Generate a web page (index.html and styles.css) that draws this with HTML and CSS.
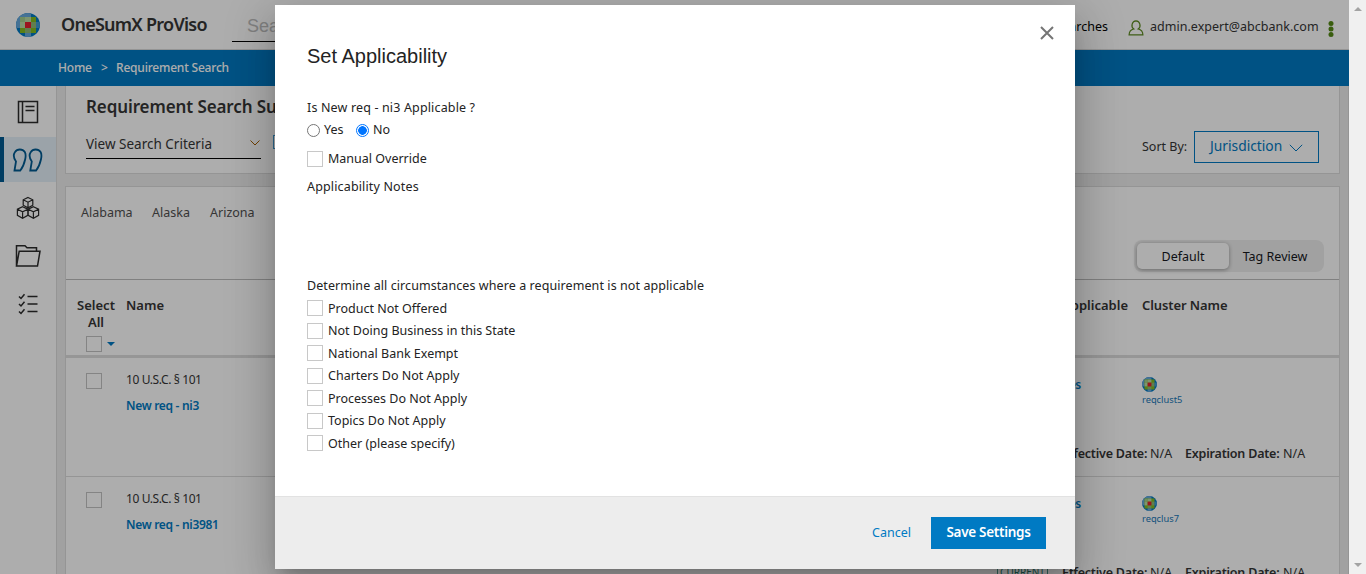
FILE: index.html
```
<!DOCTYPE html>
<html lang="en">
<head>
<meta charset="utf-8">
<title>OneSumX ProViso</title>
<link rel="stylesheet" href="styles.css">
</head>
<body>
<svg width="0" height="0" class="defs">
  <defs>
    <clipPath id="disc"><circle cx="12" cy="12" r="12"/></clipPath>
    <symbol id="globe" viewBox="0 0 24 24">
      <g clip-path="url(#disc)">
        <rect width="24" height="24" fill="#007ac3"/>
        <rect x="3" y="0" width="12" height="4" fill="#66a8dc"/>
        <rect x="0" y="4" width="4" height="11" fill="#66a8dc"/>
        <rect x="4" y="4" width="16" height="16" fill="#85bc20"/>
        <rect x="4" y="4" width="5" height="5" fill="#a3cf8c"/>
        <rect x="9" y="4" width="6" height="5" fill="#b9dca5"/>
        <rect x="4" y="9" width="5" height="6" fill="#b9dca5"/>
        <rect x="15" y="9" width="5" height="6" fill="#8fba75"/>
        <rect x="9" y="15" width="6" height="5" fill="#8fba75"/>
        <rect x="9" y="20" width="6" height="4" fill="#66a8dc"/>
        <rect x="20" y="9" width="4" height="6" fill="#409bd2"/>
        <rect x="9" y="9" width="6" height="6" fill="#e5202e"/>
      </g>
    </symbol>
  </defs>
</svg>
<div class="app">
  <div class="page">
    <header class="top">
      <svg class="logo"><use href="#globe"/></svg>
      <span class="brand">OneSumX ProViso</span>
      <span class="search">Search</span>
      <div class="user-area">
        <span class="saved">Saved Searches</span>
        <svg class="user-icon" viewBox="0 0 16 16"><path d="M8 .8a4.200 4.500 0 0 1 2.200 8.200c3 .6 4.600 2.700 4.700 5.800H1.100c.1-3.100 1.700-5.200 4.700-5.800A4.200 4.500 0 0 1 8 .8z"/></svg>
        <span class="email">admin.expert@abcbank.com</span>
        <svg class="dots" viewBox="0 0 6 18"><circle cx="3" cy="3.500" r="2.500"/><circle cx="3" cy="9" r="2.500"/><circle cx="3" cy="14.500" r="2.500"/></svg>
      </div>
    </header>
    <nav class="crumbs"><span class="c-home">Home</span><span class="c-sep">&gt;</span><span class="c-cur">Requirement Search</span></nav>
    <div class="body">
      <aside class="side">
        <div class="item"><svg viewBox="0 0 28 24"><path d="M4.500 1.500h19v21h-19zM8.500 1.500v21M11.500 6.500h9M11.500 10.500h9"/></svg></div>
        <div class="item active"><svg class="wide" viewBox="0 0 32 26"><path d="M2.500 23.500 4 14.500C1.500 11 1.300 7.500 3 5c2-3.300 7.600-3.400 9.800 0 1.200 2 1 4.500.4 7.300-1 4.600-2.300 8-4.900 11.200zM18.300 23.500l1.500-9C17.300 11 17.100 7.500 18.800 5c2-3.300 7.600-3.400 9.800 0 1.200 2 1 4.500.4 7.300-1 4.600-2.300 8-4.900 11.200z"/></svg></div>
        <div class="item"><svg class="thin" viewBox="0 0 28 24"><path d="m14 1.500 4.800 2.300v5.400L14 11.700 9.200 9.200V3.800zM9.200 3.800 14 6.200l4.800-2.400M14 6.200v5.500M8.600 10.700l5.200 2.500v6.200l-5.200 2.800-5.200-2.800v-6.200zM3.400 13.200l5.200 2.600 5.200-2.600M8.600 15.800v6.400M19.400 10.700l5.200 2.500v6.200l-5.200 2.800-5.200-2.800v-6.200zM14.200 13.200l5.200 2.600 5.200-2.600M19.400 15.800v6.400"/></svg></div>
        <div class="item"><svg viewBox="0 0 28 24"><path d="M2.500 22V1.800H11l2 2h9.500v3.400M2.500 22 5.200 7.200H26L23.500 22z"/></svg></div>
        <div class="item"><svg viewBox="0 0 28 24"><path d="m5 4.500 2 2 3.500-4.200M5 12l2 2 3.500-4.200M5 19.500l2 2 3.500-4.200M13.500 4.500h10M13.500 12h10M13.500 19.500h10"/></svg></div>
      </aside>
      <main class="main">
        <section class="summary">
          <div class="sum-left">
            <h1>Requirement Search Summary</h1>
            <div class="crit-row">
              <div class="criteria"><span>View Search Criteria</span><svg viewBox="0 0 10 6"><path d="m.5.500 4.500 4.500L9.500.500"/></svg></div>
              <span class="sqr"></span>
            </div>
          </div>
          <div class="sort"><span class="sort-label">Sort By:</span><div class="sort-box"><span>Jurisdiction</span><svg viewBox="0 0 14 8"><path d="m.8.800 6.200 6.200L13.200.800"/></svg></div></div>
        </section>
        <section class="results">
          <div class="filters">
            <div class="states"><span class="al">Alabama</span><span class="ak">Alaska</span><span class="az">Arizona</span></div>
            <div class="toggle"><span class="on">Default</span><span class="off">Tag Review</span></div>
          </div>
          <div class="thead">
            <div class="sel"><span>Select</span><span>All</span><div class="sel-box"><i class="box"></i><i class="caret"></i></div></div>
            <span class="th-name">Name</span><span class="th-app">Applicable</span><span class="th-clu">Cluster Name</span>
          </div>
          <div class="row">
            <i class="box"></i>
            <div class="req"><span class="cite">10 U.S.C. § 101</span><a class="lnk">New req - ni3</a></div>
            <a class="yes">Yes</a>
            <div class="cluster"><svg><use href="#globe"/></svg><span class="cl5">reqclust5</span></div>
            <div class="dates"><span class="tag">CURRENT</span><b class="eff">Effective Date:</b><span class="na">N/A</span><b class="exp">Expiration Date:</b><span class="na">N/A</span></div>
          </div>
          <div class="row">
            <i class="box"></i>
            <div class="req"><span class="cite">10 U.S.C. § 101</span><a class="lnk wide-lnk">New req - ni3981</a></div>
            <a class="yes">Yes</a>
            <div class="cluster"><svg><use href="#globe"/></svg><span class="cl7">reqclus7</span></div>
            <div class="dates"><span class="tag">CURRENT</span><b class="eff">Effective Date:</b><span class="na">N/A</span><b class="exp">Expiration Date:</b><span class="na">N/A</span></div>
          </div>
        </section>
      </main>
    </div>
  </div>
  <div class="scroll"><i class="up"></i><i class="down"></i></div>
</div>
<div class="backdrop">
  <div class="dialog">
    <div class="content">
      <div class="title-row"><h2>Set Applicability</h2><svg class="close" viewBox="0 0 14 14"><path d="m1 1 12 12M13 1 1 13"/></svg></div>
      <p class="question">Is New req - ni3 Applicable ?</p>
      <div class="radios"><i class="radio"></i><span class="r-yes">Yes</span><i class="radio checked"></i><span>No</span></div>
      <div class="check manual"><i class="box"></i><span>Manual Override</span></div>
      <p class="notes">Applicability Notes</p>
      <p class="determine">Determine all circumstances where a requirement is not applicable</p>
      <div class="checks">
        <div class="check"><i class="box"></i><span>Product Not Offered</span></div>
        <div class="check"><i class="box"></i><span>Not Doing Business in this State</span></div>
        <div class="check"><i class="box"></i><span>National Bank Exempt</span></div>
        <div class="check"><i class="box"></i><span>Charters Do Not Apply</span></div>
        <div class="check"><i class="box"></i><span>Processes Do Not Apply</span></div>
        <div class="check"><i class="box"></i><span>Topics Do Not Apply</span></div>
        <div class="check"><i class="box"></i><span>Other (please specify)</span></div>
      </div>
    </div>
    <footer class="actions"><a class="cancel">Cancel</a><a class="save">Save Settings</a></footer>
  </div>
</div>
</body>
</html>
```
FILE: styles.css
```
* { box-sizing: border-box; margin: 0; padding: 0; }
body { width: 1366px; height: 574px; overflow: hidden; font: 12.5px/18px "Noto Sans", "Open Sans", sans-serif; color: #353535; background: #eee; white-space: nowrap; }
.defs { position: absolute; }
svg { flex: none; fill: none; stroke: currentColor; }
use { stroke: none; }
.app { display: flex; height: 574px; }
.page { width: 1349px; height: 574px; overflow: hidden; }
.scroll { width: 17px; background: #f0f0f0; display: flex; flex-direction: column; justify-content: space-between; align-items: center; padding: 7px 0; position: relative; z-index: 3; }
.up, .down { border: 4px solid transparent; }
.up { border-top: 0; border-bottom-color: #a3a3a3; }
.down { border-bottom: 0; border-top-color: #a3a3a3; }

.top { height: 50px; background: #fff; border-bottom: 1px solid #dadada; display: flex; padding-left: 16px; }
.logo { width: 24px; height: 24px; margin-top: 13px; }
.brand { margin: 12px 0 0 21px; width: 171px; font-size: 18px; font-weight: 600; line-height: 24px; letter-spacing: -.75px; }
.search { width: 500px; height: 29px; margin-top: 13px; padding-left: 15px; border-bottom: 1px solid #000; font: 18px/26px "Liberation Sans", sans-serif; color: #bdbdbd; }
.user-area { margin-left: auto; display: flex; padding-right: 15px; line-height: 18px; font-size: 12.5px; }
.saved { margin-top: 18px; color: #000; width: 95px; display: flex; justify-content: flex-end; }
.user-icon { width: 16px; height: 16px; margin: 20px 6px 0 20px; color: #5c8a20; stroke-width: 1.200; }
.email { margin-top: 18px; width: 178px; letter-spacing: .02px; }
.dots { width: 6px; height: 18px; margin-top: 20px; fill: #548a16; stroke: none; }
.crumbs { height: 36px; background: #007ac3; color: #fff; display: flex; padding-left: 58px; line-height: 36px; font-size: 12px; font-weight: 500; letter-spacing: -.2px; }
.c-home { width: 43px; }
.c-sep { width: 15px; }
.body { display: flex; height: 488px; }

.side { width: 57px; background: #fff; border-right: 1px solid #dcdcdc; padding-top: 3px; }
.item { height: 45px; margin-bottom: 3px; display: flex; align-items: center; justify-content: center; color: #2b2b2b; }
.item svg { width: 28px; height: 24px; stroke-width: 1.500; }
.item .thin { stroke-width: 1.200; }
.item .wide { width: 32px; height: 26px; margin-right: 4px; stroke-width: 1.800; }
.active { background: #e5f1f9; color: #005b92; border-left: 4px solid #005b92; }

.main { flex: 1; padding: 0 8px; border-right: 1px solid #dcdcdc; }
.summary { height: 88px; border: 1px solid #dcdcdc; border-top: 0; background: #fff; display: flex; justify-content: space-between; padding: 9px 20px 0; }
h1 { font-size: 17px; line-height: 24px; font-weight: 600; letter-spacing: -.1px; }
.crit-row { display: flex; margin-top: 14px; }
.criteria { width: 175px; height: 26px; border-bottom: 1px solid #000; display: flex; justify-content: space-between; line-height: 22px; font-size: 13.5px; }
.criteria svg { width: 10px; height: 6px; margin: 7px 1px 0; color: #a55f00; }
.sqr { width: 14px; height: 14px; margin: 2px 0 0 12px; border: 1px solid #409bd2; }
.sort { display: flex; height: 32px; margin-top: 36px; line-height: 31px; }
.sort-label { width: 52px; }
.sort-box { width: 125px; height: 32px; border: 1px solid #007ac3; color: #007ac3; display: flex; justify-content: space-between; padding: 0 15px; font-size: 13.800px; line-height: 28px; }
.sort-box svg { width: 14px; height: 8px; margin-top: 12px; }

.results { height: 420px; margin-top: 12px; border: 1px solid #dcdcdc; background: #fff; }
.filters { height: 93px; border-bottom: 1px solid #bdbdbd; display: flex; justify-content: space-between; padding: 0 15px; }
.states { display: flex; padding-top: 17px; color: #505050; }
.al { width: 71px; }
.ak { width: 58px; }
.toggle { width: 190px; height: 32px; margin-top: 53px; border-radius: 8px; background: #eee; display: flex; padding: 3px; line-height: 27px; color: #16181c; }
.on { width: 92px; height: 26px; background: #fff; border-radius: 5px; box-shadow: 0 1px 4px #999; text-align: center; }
.off { flex: 1; text-align: center; }
.thead { height: 78px; border-bottom: 3px solid #dedede; display: grid; grid-template-columns: 60px 860px 142px 1fr; font-weight: 600; font-size: 13px; line-height: 17px; padding-top: 17px; }
.sel { display: flex; flex-direction: column; align-items: center; }
.sel-box { display: flex; align-items: center; gap: 5px; margin: 5px 0 0 8px; }
.box { display: block; width: 16px; height: 16px; border: 1px solid #c8c8c8; background: #fff; flex: none; }
.results .box { border-color: #c3c3c3; background: none; }
.caret { border: 4px solid transparent; border-top-color: #007ac3; border-bottom: 0; }
.th-app { text-align: right; }
.thead { grid-template-columns: 60px 860px 142px 1fr; }
.th-clu { padding-left: 14px; letter-spacing: -.1px; }
.row { height: 119px; border-bottom: 1px solid #dcdcdc; display: grid; grid-template-columns: 40px 860px 95px 1fr; grid-template-rows: 87px 1fr; padding-left: 20px; }
.row > .box { margin-top: 15px; }
.req { display: flex; flex-direction: column; gap: 8px; padding-top: 13px; font-size: 12px; letter-spacing: -.4px; }
.lnk, .yes { color: #007ac3; font-weight: 600; font-size: 12px; letter-spacing: -.3px; }
.yes { padding-top: 18px; text-align: right; }
.cluster { padding: 19px 0 0 61px; color: #2078b8; font-size: 9.3px; line-height: 16px; }
.cluster svg { display: block; width: 15px; height: 15px; }
.dates { grid-column: 1 / -1; display: flex; padding-left: 911px; font-size: 12.5px; }
.tag { width: 51px; height: 17px; border: 1px solid #4d9c8d; color: #207868; border-radius: 2px; font-size: 10px; line-height: 15px; text-align: center; margin-right: 14px; }
b { font-weight: 600; letter-spacing: -.2px; }
.eff { width: 88px; }
.exp { width: 98px; }
.dates .na { width: 35px; }

.backdrop { position: absolute; inset: 0 auto auto 0; width: 1349px; height: 574px; overflow: hidden; background: rgba(0,0,0,.32); padding: 5px 0 0 275px; z-index: 2; }
.dialog { width: 800px; height: 564px; background: #fff; color: #232323; box-shadow: 0 11px 15px -7px rgba(0,0,0,.2), 0 24px 38px 3px rgba(0,0,0,.14), 0 9px 46px 8px rgba(0,0,0,.12); }
.content { height: 491px; padding: 21px 21px 0 32px; letter-spacing: .04px; }
.title-row { display: flex; justify-content: space-between; height: 67px; }
h2 { font: 400 20px/60px "Liberation Sans", Arial, sans-serif; letter-spacing: 0; }
.close { width: 14px; height: 14px; color: #757575; stroke-width: 2; }
.question { padding-top: 6px; letter-spacing: .15px; }
.radios { display: flex; align-items: center; margin-top: 4px; }
.radio { width: 13px; height: 13px; border: 1px solid #767676; border-radius: 50%; margin-right: 4px; }
.checked { border-color: #0075ff; background: radial-gradient(#0075ff 0 4px, #fff 4.600px); }
.r-yes { width: 32px; }
.check { display: flex; align-items: center; gap: 5px; height: 22.5px; letter-spacing: 0; }
.check .box { margin-top: -1px; }
.manual { margin-top: 9px; }
.notes { margin-top: 7px; letter-spacing: .15px; }
.determine { margin-top: 81px; letter-spacing: .08px; }
.checks { margin-top: 3px; }
.actions { height: 73px; border-top: 1px solid #e2e2e2; background: #ededed; display: flex; justify-content: flex-end; padding: 20px 29px 0; line-height: 31px; }
.cancel { width: 59px; color: #007ac3; }
.save { width: 115px; height: 32px; background: #007ac3; color: #fff; text-align: center; font-size: 13.5px; font-weight: 600; letter-spacing: -.3px; }
```
